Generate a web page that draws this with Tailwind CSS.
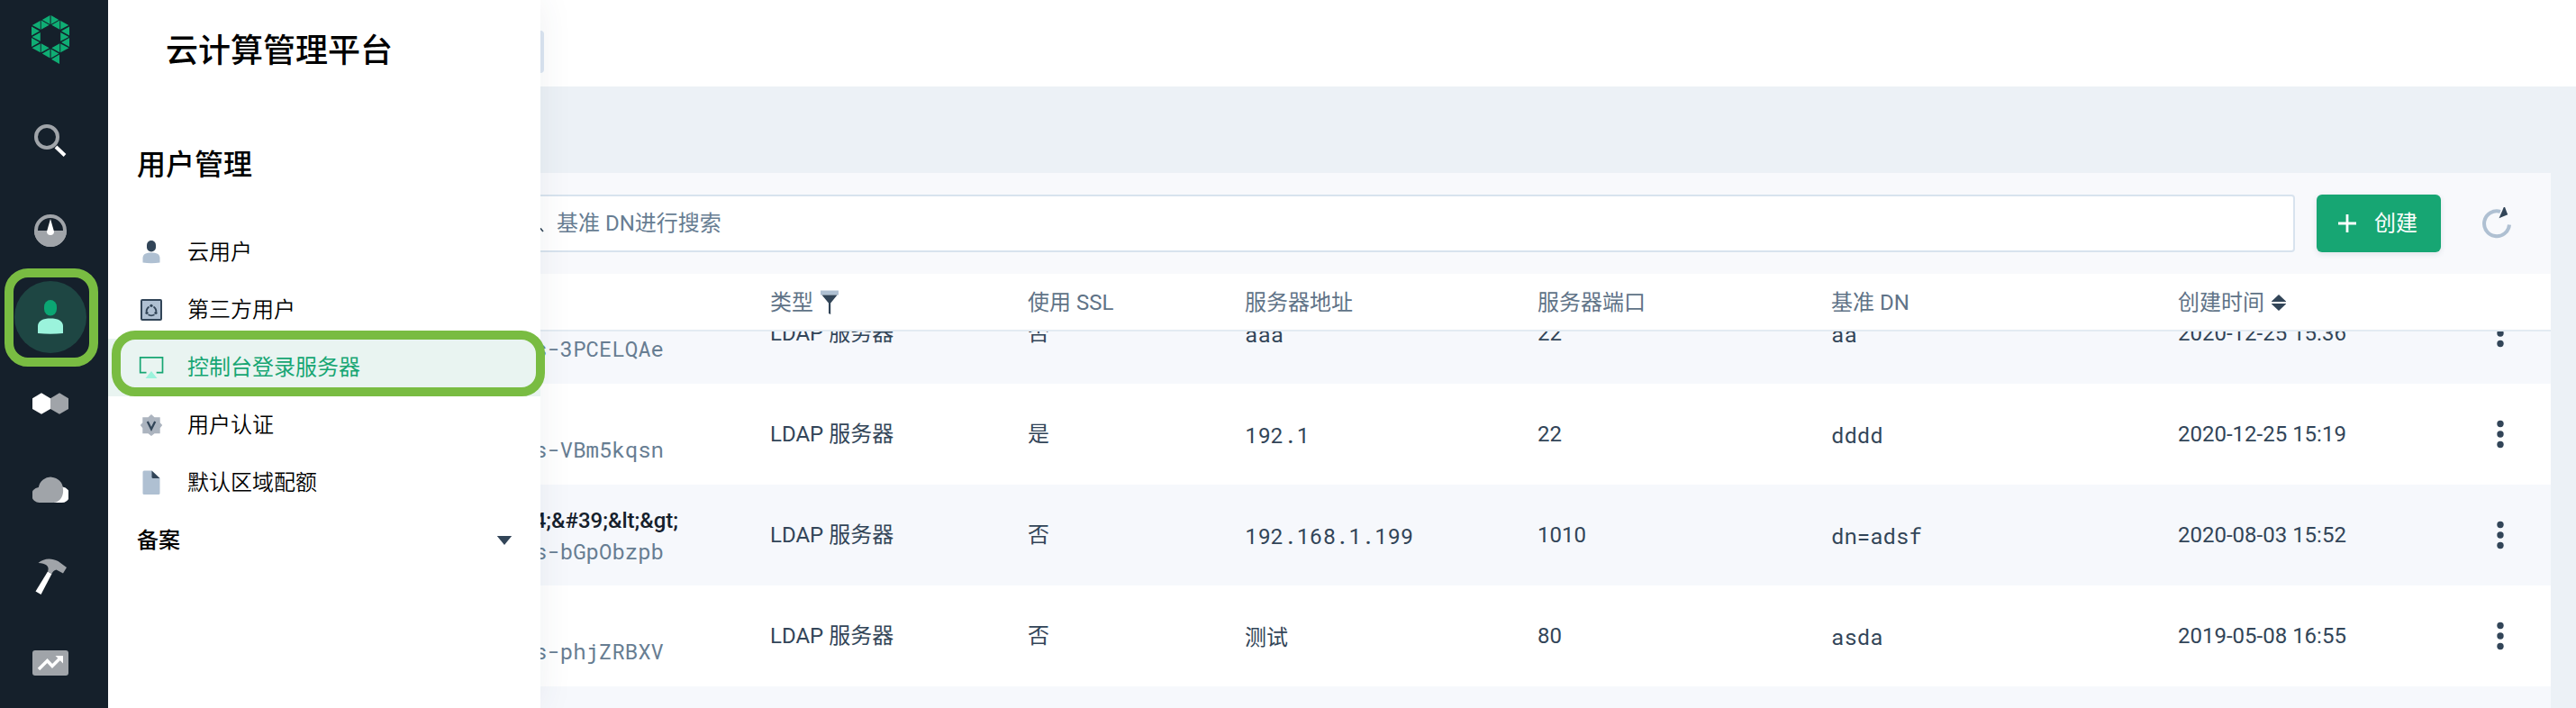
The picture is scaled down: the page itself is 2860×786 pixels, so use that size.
<!DOCTYPE html>
<html lang="zh-CN">
<head>
<meta charset="utf-8">
<title>云计算管理平台</title>
<script src="https://cdn.jsdelivr.net/npm/@tailwindcss/browser@4"></script>
</head>
<body class="relative flex h-[786px] w-[2860px] overflow-hidden bg-[#ecf1f6] font-['Roboto','Noto_Sans_CJK_SC',sans-serif] text-2xl leading-9 text-[#324558]">

<!-- Icon rail -->
<nav class="relative z-20 flex w-[120px] shrink-0 flex-col bg-[#15202b] pr-2">
  <a class="flex h-[88px] items-center justify-center">
    <svg class="h-[54px] w-[42px]" viewBox="35 17 42 54" fill="#0fad74">
      <path d="M55.500 17v10l-8.700-5zM56.600 17v10l8.700-5zM45.700 22.600v10.200l9-5.100zM66.300 22.600v10.200l-9-5.100zM44.800 23v9.700l-9-4.700zM67.200 23v9.700l9-4.700zM35 29.500v10l8.900-5zM77 29.500v10l-8.900-5zM44.800 36v9.800l-9.200-4.900zM67.200 36v9.800l9.200-4.900zM35 42v10l8.900-5zM77 42v10l-8.900-5zM44.800 48.400v9.800l-9.200-4.900zM67.200 48.400v9.800l9.200-4.900zM45.700 48.200v10l9-5zM66.300 48.200v10l-9-5zM55.500 54.500v10l-8.700-5zM56.600 54.500v10l8.700-5zM66 60.600v10.400l-9-5.300z"/>
    </svg>
  </a>
  <a class="flex h-[136px] items-center justify-center">
    <svg class="h-10 w-10" viewBox="36 136 40 40"><circle cx="52" cy="152" r="12" fill="none" stroke="#a0a4a9" stroke-width="4"/><path d="M62 163l10 9.500" stroke="#fff" stroke-width="4"/></svg>
  </a>
  <a class="flex h-[64px] items-center justify-center">
    <svg class="h-10 w-10" viewBox="36 236 40 40"><circle cx="56" cy="256" r="16" fill="none" stroke="#a0a4a9" stroke-width="4"/><path d="M38 256h36a18 18 0 0 1-36 0z" fill="#a0a4a9"/><path d="M56 243l4 14a4 4 0 1 1-8 0z" fill="#fff"/></svg>
  </a>
  <a class="mt-6 flex h-20 items-center justify-center">
    <span class="flex h-20 w-20 items-center justify-center rounded-full bg-[#1e4643]">
      <svg class="h-10 w-10" viewBox="36 332 40 40"><rect x="49" y="333" width="14" height="17.500" rx="7" ry="7.500" fill="#0ba673"/><path d="M42 370v-8c0-6 6-8.500 14-8.500s14 2.500 14 8.500v8c-9 1-19 1-28 0z" fill="#9bf3dc"/></svg>
    </span>
  </a>
  <a class="mt-9 flex h-10 items-center justify-center">
    <svg class="h-10 w-10" viewBox="36 428 40 40"><path d="M46 436.300l10 5.900v11.800l-10 5.800-10-5.800v-11.800z" fill="#fff"/><path d="M66 436.300l10 5.900v11.800l-10 5.800-10-5.800v-11.800z" fill="#a0a4a9"/></svg>
  </a>
  <a class="mt-14 flex h-10 items-center justify-center">
    <svg class="h-10 w-10" viewBox="36 524 40 40"><path d="M60 540.500h9.500a8.600 8.600 0 0 1-2 17.500H60z" fill="#fff"/><path d="M44.500 558a8.500 8.500 0 0 1-1.700-17 13.700 13.700 0 0 1 27.200 2c1 8-4 15-11 15z" fill="#a0a4a9"/></svg>
  </a>
  <a class="mt-14 flex h-10 items-center justify-center">
    <svg class="h-10 w-10" viewBox="36 620 40 40"><path d="M53 634.500l4.500 2.500-12 23-6-3.500z" fill="#fff"/><path d="M42.500 625c6-5.500 14.500-6 22-2l9.500 7-4 6.500-7.500-4c-3 .5-4 2.500-5 4.500l-4.500-2.500c1.500-4 1-9-10.500-9.500z" fill="#a0a4a9"/></svg>
  </a>
  <a class="mt-14 flex h-10 items-center justify-center">
    <svg class="h-10 w-10" viewBox="36 716 40 40"><rect x="36" y="722" width="40" height="28" rx="3" fill="#a0a4a9"/><path d="M43 743l9.500-9.500 5.500 6 9.500-9.500" fill="none" stroke="#fff" stroke-width="3.500"/><path d="M61.500 728h8.500v8.500z" fill="#fff"/></svg>
  </a>
  <span class="absolute left-[5px] top-[298px] h-[109px] w-[104px] rounded-[26px] border-10 border-[#79bc42]"></span>
</nav>

<!-- Section menu -->
<aside class="relative z-10 flex w-[480px] shrink-0 flex-col bg-white text-black shadow-[0_0_36px_rgba(50,69,88,0.08)]">
  <h1 class="mt-[30px] pl-16 text-4xl leading-[54px] font-medium">云计算管理平台</h1>
  <h2 class="mt-[75px] pl-8 text-[32px] leading-12 font-medium">用户管理</h2>
  <ul class="mt-[41px] font-[350]">
    <li class="flex h-16 items-center gap-6 pl-8">
      <svg class="h-8 w-8" viewBox="152 264 32 32"><rect x="163" y="267" width="10" height="12.500" rx="5" fill="#324558"/><path d="M158.500 291.500v-5c0-4.500 4-6 9.500-6s9.500 1.500 9.500 6v5c-6 1-13 1-19 0z" fill="#afc0d2"/></svg>
      <span>云用户</span>
    </li>
    <li class="flex h-16 items-center gap-6 pl-8">
      <svg class="h-8 w-8" viewBox="152 328 32 32"><rect x="157" y="333" width="22" height="22" rx="1" fill="#afc0d2" stroke="#324558" stroke-width="2"/><path d="M165.500 340.500q-3 2-3 5.500M170.500 340.500q3 2 3 5.500M164.500 349.300q3.500 2 7 0" fill="none" stroke="#324558" stroke-width="1.700"/><circle cx="168" cy="339.300" r="1.600" fill="#324558"/><circle cx="163" cy="347.300" r="1.600" fill="#324558"/><circle cx="173" cy="347.300" r="1.600" fill="#324558"/></svg>
      <span>第三方用户</span>
    </li>
    <li class="flex h-16 items-center gap-6 bg-[#e9f4f1] pl-8 font-normal text-[#17a673]">
      <svg class="h-8 w-8" viewBox="152 392 32 32"><path d="M162.500 413.700h-6.800v-16.900h24.800v16.900h-6.800" fill="none" stroke="#17a673" stroke-width="1.700"/><path d="M168 412l6.500 8h-13z" fill="#9bf3dc"/></svg>
      <span>控制台登录服务器</span>
    </li>
    <li class="flex h-16 items-center gap-6 pl-8">
      <svg class="h-8 w-8" viewBox="152 456 32 32"><path d="M168 460l3.500 3.200h6.200v6l2.500 2.800-2.500 3.200v6h-6.200L168 484l-3.500-2.800h-6.200v-6l-2.500-3.200 2.500-2.800v-6h6.200z" fill="#acb4bf"/><path d="M163.800 468l4.200 8.500 4.200-8.500" fill="none" stroke="#324558" stroke-width="2.300"/></svg>
      <span>用户认证</span>
    </li>
    <li class="flex h-16 items-center gap-6 pl-8">
      <svg class="h-8 w-8" viewBox="152 520 32 32"><path d="M160 522.500h8.500l9 8.500v16.500q0 1.500-1.500 1.500h-16q-1.500 0-1.500-1.500V524q0-1.500 1.500-1.500z" fill="#afc0d2"/><path d="M168.500 522.500l9 8.500h-7.500q-1.500 0-1.500-1.500z" fill="#324558"/></svg>
      <span>默认区域配额</span>
    </li>
    <li class="flex h-16 items-center justify-between pr-[31px] pl-8 font-medium">
      <span>备案</span>
      <svg class="h-[10px] w-[18px]" viewBox="0 0 18 11"><path d="M0 0h18l-9 11z" fill="#324558"/></svg>
    </li>
  </ul>
  <span class="absolute top-[367px] left-[4px] h-[73px] w-[481px] rounded-[26px] border-10 border-[#79bc42]"></span>
</aside>

<!-- Content -->
<main class="flex min-w-0 flex-1 flex-col">
  <header class="flex h-24 shrink-0 items-center bg-white pb-[15px] pt-[34px]">
    <span class="h-[47px] w-1 rounded-r bg-[#dce6f2]"></span>
  </header>
  <section class="mt-24 mr-7 flex min-h-0 flex-1 flex-col overflow-hidden">
    <div class="flex h-28 shrink-0 items-center bg-[#f8f9fc]">
      <div class="flex h-16 w-[1948px] items-center rounded-r border-2 border-l-0 border-[#d8e3ee] bg-white text-[#677d92]">
        <svg class="h-6 w-[18px]" viewBox="0 0 18 24"><path d="M-3 14l6 7" stroke="#324558" stroke-width="1.600"/></svg>
        <span>基准 DN进行搜索</span>
      </div>
      <button class="ml-6 flex h-16 w-[138px] items-center rounded-md bg-[#17a673] pl-6 text-white shadow-[0_2px_6px_rgba(50,69,88,0.12)]">
        <svg class="h-5 w-5" viewBox="0 0 20 20"><path d="M0 10h20M10 0v20" stroke="#fff" stroke-width="2.800"/></svg>
        <span class="ml-5 font-normal">创建</span>
      </button>
      <svg class="ml-11 h-9 w-9" viewBox="2754 230 36 36"><path d="M2776 234.800A14 14 0 1 0 2786 249.500" fill="none" stroke="#afc0d2" stroke-width="4"/><path d="M2780.500 228.500l3.700 9.700-9.700 4z" fill="#324558"/></svg>
    </div>
    <div class="grid h-16 shrink-0 grid-cols-[255px_286px_241px_325px_326px_385px_1fr] items-center border-b-2 border-[#e3ebf2] bg-white pt-0.5 text-[#5f7387]">
      <span></span>
      <span class="flex items-center gap-2">类型<svg class="h-8 w-5" viewBox="0 0 20 32"><path d="M0 2.500h20v5H0z" fill="#afc0d2"/><path d="M1.500 7.500h17l-7.300 9V29l-2.200-1V16.500z" fill="#324558"/></svg></span>
      <span>使用 SSL</span>
      <span>服务器地址</span>
      <span>服务器端口</span>
      <span>基准 DN</span>
      <span class="flex items-center gap-2">创建时间<svg class="h-[18px] w-4" viewBox="0 0 16 18"><path d="M8 0l8 7.500v.5H0v-.5zM8 18l8-7.500V10H0v.5z" fill="#324558"/></svg></span>
    </div>
    <div class="flex min-h-0 flex-1 flex-col justify-start overflow-hidden">
      <div class="-mt-[54px] grid h-28 shrink-0 grid-cols-[255px_286px_241px_325px_326px_385px_1fr_112px] items-center bg-[#f6f8fc]">
        <span class="-ml-[7px] pt-[34px] font-['Roboto_Mono','Noto_Sans_CJK_SC',monospace] text-[#677d92]">s-3PCELQAe</span>
        <span>LDAP 服务器</span><span>否</span>
        <span class="pt-0.5 font-['Roboto_Mono','Noto_Sans_CJK_SC',monospace]">aaa</span><span>22</span>
        <span class="pt-0.5 font-['Roboto_Mono','Noto_Sans_CJK_SC',monospace]">aa</span><span>2020-12-25 15:36</span>
        <svg class="h-8 w-2 justify-self-center" viewBox="0 0 8 32" fill="#324558"><circle cx="4" cy="4.500" r="3.700"/><circle cx="4" cy="16" r="3.700"/><circle cx="4" cy="27.500" r="3.700"/></svg>
      </div>
      <div class="grid h-28 shrink-0 grid-cols-[255px_286px_241px_325px_326px_385px_1fr_112px] items-center bg-white">
        <span class="-ml-[7px] pt-[34px] font-['Roboto_Mono','Noto_Sans_CJK_SC',monospace] text-[#677d92]">s-VBm5kqsn</span>
        <span>LDAP 服务器</span><span>是</span>
        <span class="pt-0.5 font-['Roboto_Mono','Noto_Sans_CJK_SC',monospace]">192.1</span><span>22</span>
        <span class="pt-0.5 font-['Roboto_Mono','Noto_Sans_CJK_SC',monospace]">dddd</span><span>2020-12-25 15:19</span>
        <svg class="h-8 w-2 justify-self-center" viewBox="0 0 8 32" fill="#324558"><circle cx="4" cy="4.500" r="3.700"/><circle cx="4" cy="16" r="3.700"/><circle cx="4" cy="27.500" r="3.700"/></svg>
      </div>
      <div class="grid h-28 shrink-0 grid-cols-[255px_286px_241px_325px_326px_385px_1fr_112px] items-center bg-[#f6f8fc]">
        <span class="-ml-[7px] flex flex-col items-start pt-px">
          <span class="flex w-[160px] justify-end leading-[34px] font-medium whitespace-nowrap text-[#15202b]">4;&amp;#39;&amp;lt;&amp;gt;</span>
          <span class="font-['Roboto_Mono','Noto_Sans_CJK_SC',monospace] leading-[34px] text-[#677d92]">s-bGpObzpb</span>
        </span>
        <span>LDAP 服务器</span><span>否</span>
        <span class="pt-0.5 font-['Roboto_Mono','Noto_Sans_CJK_SC',monospace]">192.168.1.199</span><span>1010</span>
        <span class="pt-0.5 font-['Roboto_Mono','Noto_Sans_CJK_SC',monospace]">dn=adsf</span><span>2020-08-03 15:52</span>
        <svg class="h-8 w-2 justify-self-center" viewBox="0 0 8 32" fill="#324558"><circle cx="4" cy="4.500" r="3.700"/><circle cx="4" cy="16" r="3.700"/><circle cx="4" cy="27.500" r="3.700"/></svg>
      </div>
      <div class="grid h-28 shrink-0 grid-cols-[255px_286px_241px_325px_326px_385px_1fr_112px] items-center bg-white">
        <span class="-ml-[7px] pt-[34px] font-['Roboto_Mono','Noto_Sans_CJK_SC',monospace] text-[#677d92]">s-phjZRBXV</span>
        <span>LDAP 服务器</span><span>否</span>
        <span class="pt-0.5 font-['Roboto_Mono','Noto_Sans_CJK_SC',monospace]">测试</span><span>80</span>
        <span class="pt-0.5 font-['Roboto_Mono','Noto_Sans_CJK_SC',monospace]">asda</span><span>2019-05-08 16:55</span>
        <svg class="h-8 w-2 justify-self-center" viewBox="0 0 8 32" fill="#324558"><circle cx="4" cy="4.500" r="3.700"/><circle cx="4" cy="16" r="3.700"/><circle cx="4" cy="27.500" r="3.700"/></svg>
      </div>
      <div class="h-28 shrink-0 bg-[#f6f8fc]"></div>
    </div>
  </section>
</main>
</body>
</html>
